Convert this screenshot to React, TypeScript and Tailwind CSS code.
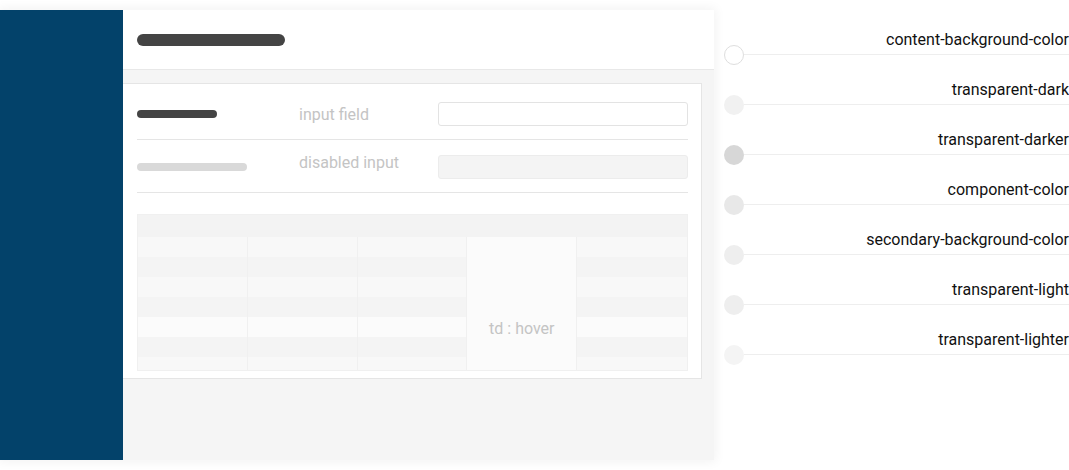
const LEGEND = [
  { label: "content-background-color", dot: "bg-white border border-[#dedede]" },
  { label: "transparent-dark", dot: "bg-[#f1f1f1]" },
  { label: "transparent-darker", dot: "bg-[#d7d7d7]" },
  { label: "component-color", dot: "bg-[#e8e8e8]" },
  { label: "secondary-background-color", dot: "bg-[#eeeeee]" },
  { label: "transparent-light", dot: "bg-[#eeeeee]" },
  { label: "transparent-lighter", dot: "bg-[#f4f4f4]" },
];

// row backgrounds, top to bottom
const ROWS = [
  "bg-[#f8f8f8]",
  "bg-[#f4f4f4]",
  "bg-[#f8f8f8]",
  "bg-[#f4f4f4]",
  "bg-[#fbfbfb]",
  "bg-[#f4f4f4]",
  "bg-[#f8f8f8]",
];

function Table() {
  return (
    <div className="mt-[21px] h-[157px] overflow-hidden border border-[#f0f0f0]">
      <div className="h-[22px] bg-[#f3f3f3]" />
      {ROWS.map((bg, i) => (
        <div key={i} className={`grid h-[20px] grid-cols-5 ${bg}`}>
          {[0, 1, 2, 3, 4].map((c) => (
            <div
              key={c}
              className={
                c === 3
                  ? "flex items-center justify-center border-r border-[#f0f0f0] bg-[#fbfbfb] text-[16px] text-[#c4c4c4]"
                  : c === 4
                    ? ""
                    : "border-r border-[#f0f0f0]"
              }
            >
              {c === 3 && i === 4 ? "td : hover" : null}
            </div>
          ))}
        </div>
      ))}
    </div>
  );
}

export default function App() {
  return (
    <div className="flex h-[470px] w-[1069px] bg-white font-['Roboto',sans-serif]">
      {/* Panel */}
      <div className="mt-[10px] flex h-[450px] w-[714px] shrink-0 shadow-[0_0_10px_2px_rgba(0,0,0,0.05)]">
        <div className="w-[123px] shrink-0 bg-[#03426a]" />

        <div className="flex flex-1 flex-col">
          {/* Header */}
          <div className="flex h-[60px] items-center border-b border-[#e8e8e8] bg-white pl-[14px]">
            <div className="h-[12px] w-[148px] rounded-full bg-[#444444]" />
          </div>

          {/* Content */}
          <div className="flex-1 bg-[#f5f5f5] pt-[13px] pr-[12px]">
            <div className="h-[296px] border border-l-0 border-[#e5e5e5] bg-white pl-[14px] pr-[13px]">
              <div className="grid grid-cols-[162px_139px_1fr] items-center border-b border-[#e5e5e5] pt-[18px] pb-[13px]">
                <div className="h-[8px] w-[80px] rounded-full bg-[#444444]" />
                <div className="h-[24px] text-[16px] leading-[26px] text-[#c4c4c4]">input field</div>
                <div className="h-[24px] rounded-[3px] border border-[#e3e3e3] bg-white" />
              </div>
              <div className="grid grid-cols-[162px_139px_1fr] items-center border-b border-[#e5e5e5] pt-[15px] pb-[13px]">
                <div className="h-[8px] w-[110px] rounded-full bg-[#d9d9d9]" />
                <div className="h-[24px] text-[16px] leading-[16px] text-[#c4c4c4]">disabled input</div>
                <div className="h-[24px] rounded-[3px] border border-[#ececec] bg-[#f4f4f4]" />
              </div>
              <Table />
            </div>
          </div>
        </div>
      </div>

      {/* Legend */}
      <div className="ml-[10px] flex flex-1 flex-col">
        {LEGEND.map((item, i) => (
          <div key={item.label} className={`flex h-[50px] items-end ${i === 0 ? "mt-[5px]" : ""}`}>
            <div className={`-mb-[10px] h-[20px] w-[20px] shrink-0 rounded-full ${item.dot}`} />
            <div className="flex-1 border-b border-[#eeeeee] pb-[4px] text-right text-[16px] leading-[20px] text-[#111111]">
              {item.label}
            </div>
          </div>
        ))}
      </div>
    </div>
  );
}
